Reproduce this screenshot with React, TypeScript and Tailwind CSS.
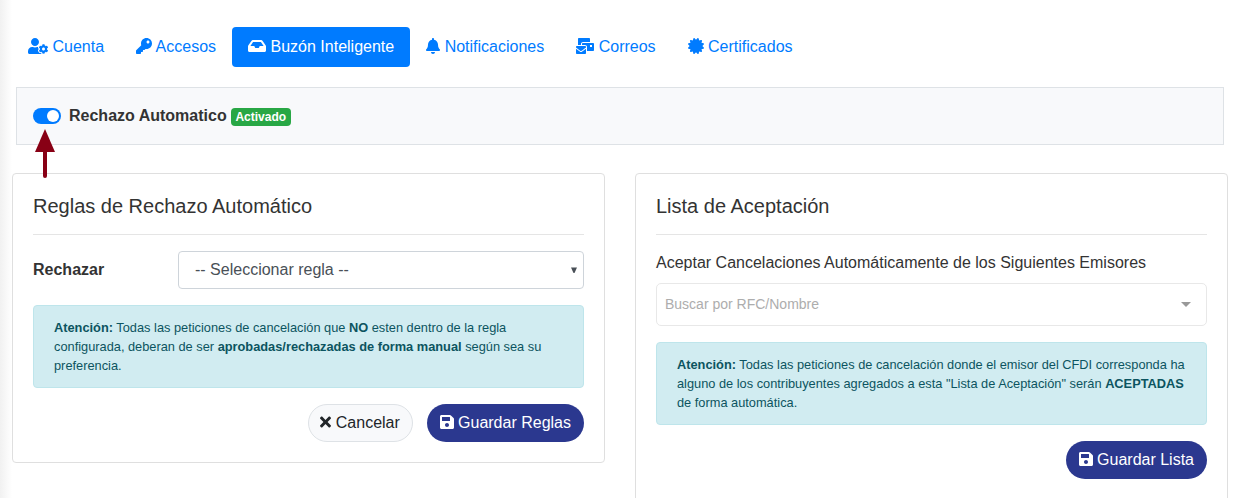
import type { ComponentType, ReactNode } from "react";
import {
  FaBell,
  FaCertificate,
  FaInbox,
  FaKey,
  FaMailBulk,
  FaSave,
  FaTimes,
  FaUserCog,
} from "react-icons/fa";

type Tab = {
  label: string;
  Icon: ComponentType<{ className?: string }>;
  width: string;
  active?: boolean;
};

const tabs: Tab[] = [
  { label: "Cuenta", Icon: FaUserCog, width: "w-5" },
  { label: "Accesos", Icon: FaKey, width: "w-4" },
  { label: "Buzón Inteligente", Icon: FaInbox, width: "w-[18px]", active: true },
  { label: "Notificaciones", Icon: FaBell, width: "w-3.5" },
  { label: "Correos", Icon: FaMailBulk, width: "w-[18px]" },
  { label: "Certificados", Icon: FaCertificate, width: "w-4" },
];

function Tabs() {
  return (
    <nav className="flex">
      {tabs.map(({ label, Icon, width, active }) => (
        <a
          key={label}
          className={`block rounded px-4 py-2 whitespace-nowrap ${active ? "bg-[#007bff] text-white" : "text-[#007bff]"}`}
        >
          <Icon className={`inline-block h-4 align-[-2px] ${width}`} /> {label}
        </a>
      ))}
    </nav>
  );
}

function Card({ title, className, children }: { title: string; className: string; children: ReactNode }) {
  return (
    <section className={`w-[593px] rounded border border-[#dfdfdf] bg-white p-5 ${className}`}>
      <h5 className="mb-4 text-[20px] leading-6">{title}</h5>
      <hr className="mb-4 border-[#e5e5e5]" />
      {children}
    </section>
  );
}

function Notice({ children }: { children: ReactNode }) {
  return (
    <div className="mt-4 h-[83px] rounded border border-[#bee5eb] bg-[#d1ecf1] py-3 pl-5 text-[12.8px] leading-[19.2px] whitespace-nowrap text-[#0c5460]">
      {children}
    </div>
  );
}

function SaveButton({ children }: { children: ReactNode }) {
  return (
    <button className="h-[38px] rounded-full bg-[#2b388f] px-[13px] whitespace-nowrap text-white">
      <FaSave className="inline-block h-4 w-3.5 align-[-2px]" /> {children}
    </button>
  );
}

export default function App() {
  return (
    <div className="flex h-[498px] w-[1234px] overflow-hidden bg-white font-['Liberation_Sans',Arial,sans-serif] text-[16px] leading-6 text-[#333]">
      <div className="w-3 shrink-0 bg-linear-to-r from-[#f1f1f1] to-white" />
      <main className="w-[1216px] shrink-0 pt-[27px]">
        <Tabs />

        <div className="relative mx-1 mt-5 flex h-[58px] items-start border border-[#dee2e6] bg-[#f8f9fb] px-4 pt-4">
          <span className="mt-1 flex h-4 w-7 justify-end rounded-full bg-[#007bff] p-0.5">
            <span className="size-3 rounded-full bg-white" />
          </span>
          <strong className="ml-2">Rechazo Automatico</strong>
          <span className="mt-1 ml-1 h-[18px] rounded bg-[#28a745] px-[4.8px] text-[12px] leading-[18px] font-bold text-white">
            Activado
          </span>
          <svg className="absolute top-[41px] left-[18px] z-10" width="20" height="50" viewBox="0 0 20 50">
            <path d="M10 0 L20 23 H0 Z" fill="#880015" />
            <path d="M10 21 V47" stroke="#880015" strokeWidth="4" strokeLinecap="round" />
          </svg>
        </div>

        <div className="mt-7 flex items-start justify-between">
          <Card title="Reglas de Rechazo Automático" className="h-[290px]">
            <div className="flex items-center">
              <strong className="w-[145px]">Rechazar</strong>
              <div className="flex h-[38px] flex-1 items-center justify-between rounded border border-[#ced4da] pr-[6px] pl-4 text-[#495057]">
                <span>-- Seleccionar regla --</span>
                <svg width="6" height="7" viewBox="0 0 6 7">
                  <path d="M0 0.5 H6 L3.5 6 H2.5 Z" fill="#495057" />
                </svg>
              </div>
            </div>
            <Notice>
              <b>Atención:</b> Todas las peticiones de cancelación que <b>NO</b> esten dentro de la regla
              <br />
              configurada, deberan de ser <b>aprobadas/rechazadas de forma manual</b> según sea su
              <br />
              preferencia.
            </Notice>
            <div className="mt-4 flex justify-end gap-3.5">
              <button className="h-[38px] w-[105px] rounded-full border border-[#dee2e6] bg-[#f8f9fb] whitespace-nowrap text-[#212529]">
                <FaTimes className="inline-block h-4 w-[11px] align-[-2px]" /> Cancelar
              </button>
              <SaveButton>Guardar Reglas</SaveButton>
            </div>
          </Card>

          <Card title="Lista de Aceptación" className="h-[340px]">
            <label className="mb-2 block">Aceptar Cancelaciones Automáticamente de los Siguientes Emisores</label>
            <div className="flex h-[43px] items-center justify-between rounded-[5px] border border-[#e8e8e8] pr-[15px] pl-2 text-[14px] text-[#adadad]">
              <span className="pb-0.5">Buscar por RFC/Nombre</span>
              <svg width="10" height="5" viewBox="0 0 10 5">
                <path d="M0 0 H10 L5 5 Z" fill="#999" />
              </svg>
            </div>
            <Notice>
              <b>Atención:</b> Todas las peticiones de cancelación donde el emisor del CFDI corresponda ha
              <br />
              alguno de los contribuyentes agregados a esta "Lista de Aceptación" serán <b>ACEPTADAS</b>
              <br />
              de forma automática.
            </Notice>
            <div className="mt-4 flex justify-end">
              <SaveButton>Guardar Lista</SaveButton>
            </div>
          </Card>
        </div>
      </main>
    </div>
  );
}
